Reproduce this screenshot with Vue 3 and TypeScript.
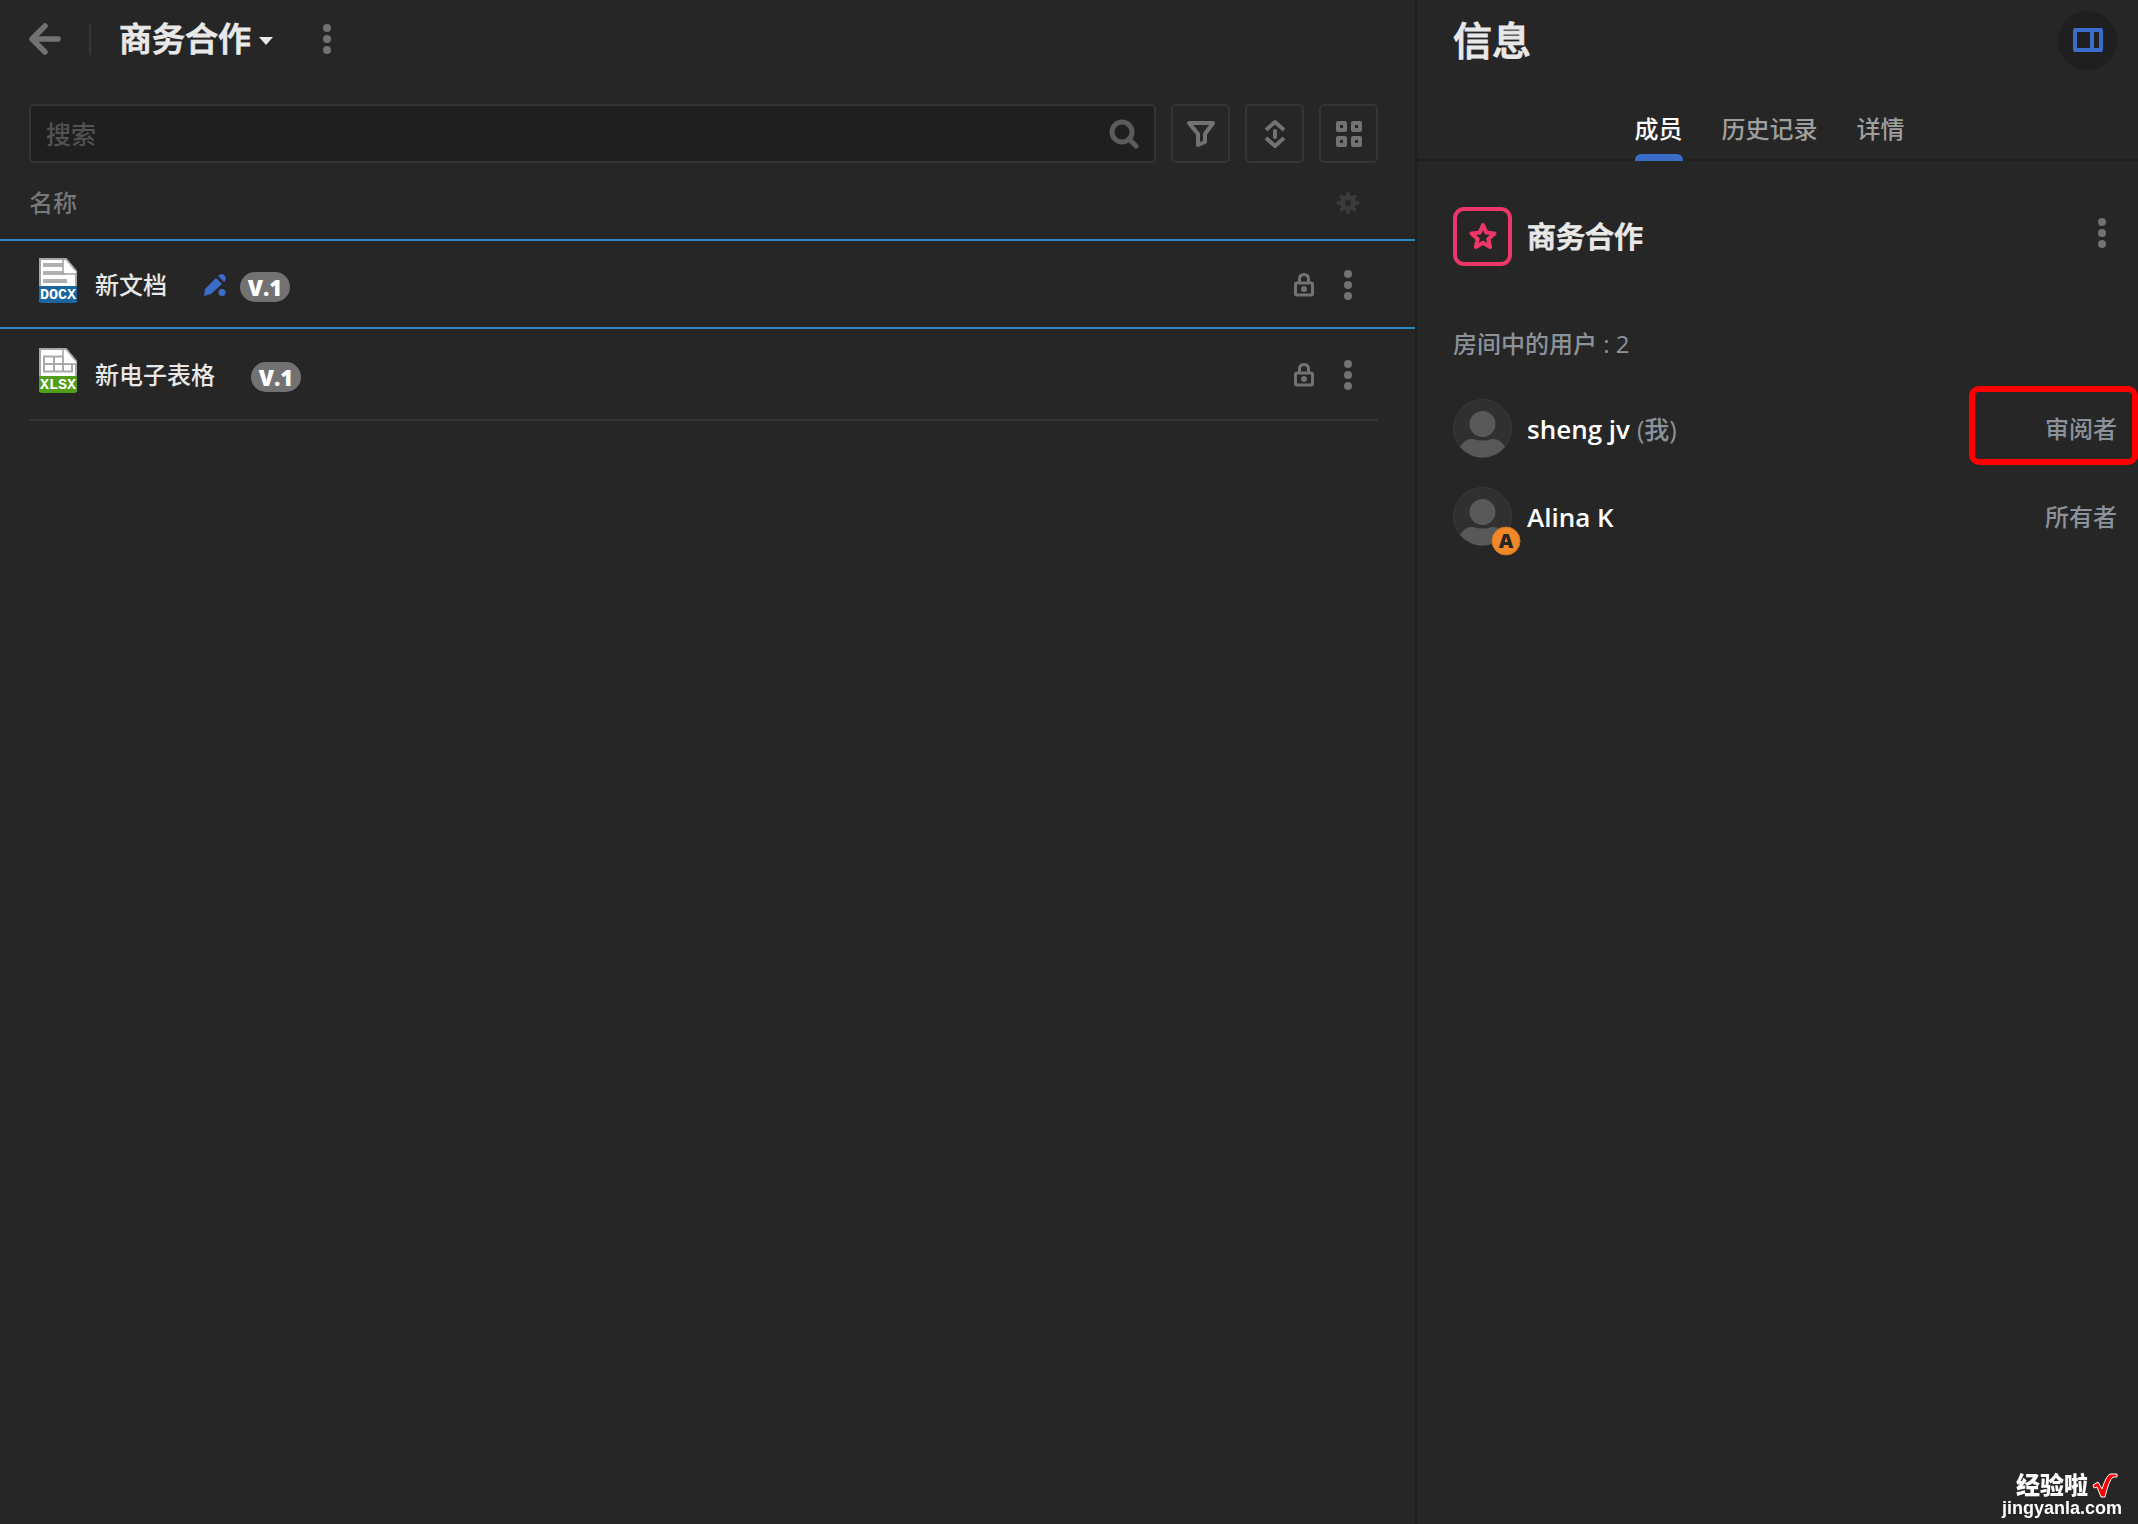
<script setup lang="ts">
import { ref } from 'vue'

interface FileItem {
  name: string
  kind: 'docx' | 'xlsx'
  editing: boolean
  version: string
}

interface Member {
  name: string
  self: boolean
  role: string
  admin: boolean
}

const files: FileItem[] = [
  { name: '新文档', kind: 'docx', editing: true, version: 'V.1' },
  { name: '新电子表格', kind: 'xlsx', editing: false, version: 'V.1' },
]

const members: Member[] = [
  { name: 'sheng jv', self: true, role: '审阅者', admin: false },
  { name: 'Alina K', self: false, role: '所有者', admin: true },
]

const tabs = ['成员', '历史记录', '详情']
const activeTab = ref('成员')
const activeFile = ref('新文档')
const query = ref('')
</script>

<template>
  <div class="app">
    <main class="files">
      <header class="bar">
        <button class="plain back" aria-label="返回">
          <svg width="32" height="32" viewBox="0 0 32 32"><path d="M16 3 3 16l13 13M4 16h25" fill="none" stroke="currentColor" stroke-width="5.500" stroke-linecap="round" stroke-linejoin="round" /></svg>
        </button>
        <span class="rule"></span>
        <button class="plain room-title">
          <h1>商务合作</h1>
          <svg width="14" height="8" viewBox="0 0 14 8"><path d="M0 0h14L7 8z" fill="currentColor" /></svg>
        </button>
        <button class="plain dots header-dots" aria-label="更多"><i></i><i></i><i></i></button>
      </header>

      <div class="tools">
        <label class="search">
          <input v-model="query" type="text" placeholder="搜索" aria-label="搜索" />
          <svg width="30" height="30" viewBox="0 0 30 30"><g fill="none" stroke="currentColor"><circle cx="13" cy="13" r="10" stroke-width="5" /><path d="m20 20 7 7" stroke-width="5" stroke-linecap="round" /></g></svg>
        </label>
        <button class="tool" aria-label="筛选">
          <svg width="30" height="28" viewBox="0 0 30 28"><path d="M3 3h24l-8 11v8l-7 3V14z" fill="none" stroke="currentColor" stroke-width="4" stroke-linejoin="round" /></svg>
        </button>
        <button class="tool" aria-label="排序">
          <svg width="22" height="30" viewBox="0 0 22 30"><g fill="none" stroke="currentColor" stroke-width="4"><path d="m2 11 9-8 9 8M2 19l9 8 9-8" stroke-linejoin="round" /><path d="M11 12v6" stroke-linecap="round" /></g></svg>
        </button>
        <button class="tool" aria-label="视图">
          <svg width="26" height="26" viewBox="0 0 26 26"><g fill="none" stroke="currentColor" stroke-width="4" stroke-linejoin="round"><path d="M2 2h7v7H2zM17 2h7v7h-7zM2 17h7v7H2zM17 17h7v7h-7z" /></g></svg>
        </button>
      </div>

      <table>
        <thead>
          <tr>
            <th scope="col"><div class="head">名称</div></th>
            <th class="end">
              <div class="actions">
                <button class="plain gear" aria-label="列设置">
                  <svg width="22" height="22" viewBox="0 0 22 22"><g fill="none" stroke="currentColor"><circle cx="11" cy="11" r="5.500" stroke-width="5" /><path d="M11 1.500v3M11 17.500v3M1.500 11h3M17.500 11h3M4.300 4.300l2 2M15.700 15.700l2 2M4.300 17.700l2-2M15.700 6.300l2-2" stroke-width="3.500" stroke-linecap="round" /></g></svg>
                </button>
              </div>
            </th>
          </tr>
        </thead>
        <tbody>
          <tr v-for="f in files" :key="f.name" :class="{ active: f.name === activeFile }" @click="activeFile = f.name">
            <td>
              <div class="file">
                <svg class="file-icon" width="38" height="45" viewBox="0 0 38 45">
                  <path d="M1 1h26l10 12v30H1z" fill="#fff" stroke="#a6a6a6" stroke-width="2" />
                  <g v-if="f.kind === 'docx'" fill="#b0b0b0"><path d="M4 5h20v4H4zM4 13h22v4H4zM4 21h24v4H4z" /></g>
                  <path v-else d="M5 8.500h28v15H5zM5 16h28M15 8v16M24 8v16" fill="none" stroke="#a9a9a9" stroke-width="2" />
                  <path d="M24 2h3l10 11v3H24z" fill="#fff" />
                  <path d="M24 1v15h13" fill="none" stroke="#a0a0a0" stroke-width="1.500" />
                  <path d="m27 1 10 12" stroke="#a6a6a6" stroke-width="1.500" />
                  <path d="M0 28h38v14q0 3-3 3H3q-3 0-3-3z" :fill="f.kind === 'docx' ? '#1b669f' : '#539e18'" />
                  <text x="19" y="41" text-anchor="middle" class="ext">{{ f.kind.toUpperCase() }}</text>
                </svg>
                <span class="name">{{ f.name }}</span>
                <svg v-if="f.editing" class="pencil" width="24" height="24" viewBox="0 0 24 24"><g fill="currentColor"><path d="m13 5 6 6L8 21l-7 2 1-7z" /><path d="M15 3q4-4 7 0 2 3-1 6z" /><circle cx="19" cy="19.500" r="3.500" /></g></svg>
                <span class="version" :class="{ apart: !f.editing }">{{ f.version }}</span>
              </div>
            </td>
            <td class="end">
              <div class="actions">
                <button class="plain lock" aria-label="锁定">
                  <svg width="20" height="24" viewBox="0 0 20 24"><g fill="none" stroke="currentColor" stroke-width="3"><rect x="1.500" y="10" width="17" height="12" rx="1.500" /><path d="M5.500 10V6q0-4.500 4.500-4.500T14.500 6v4" /></g><circle cx="10" cy="16" r="3" fill="currentColor" /></svg>
                </button>
                <button class="plain dots" aria-label="更多"><i></i><i></i><i></i></button>
              </div>
            </td>
          </tr>
        </tbody>
      </table>
    </main>

    <aside class="info">
      <header class="info-bar">
        <h2>信息</h2>
        <button class="plain toggle" aria-label="信息面板">
          <svg width="30" height="24" viewBox="0 0 30 24"><path d="M2 2h26v20H2zM19 2v20" fill="none" stroke="currentColor" stroke-width="4" stroke-linejoin="round" /></svg>
        </button>
      </header>
      <nav class="tabs">
        <button v-for="t in tabs" :key="t" class="plain tab" :class="{ on: t === activeTab }" @click="activeTab = t">{{ t }}</button>
      </nav>

      <section class="room">
        <span class="room-icon">
          <svg width="30" height="30" viewBox="0 0 30 30"><path d="m15 3 3.300 7.600 8.200.8-6.200 5.500 1.800 8.100-7.100-4.200L7.900 25l1.800-8.100-6.200-5.500 8.200-.8z" fill="none" stroke="currentColor" stroke-width="4" stroke-linejoin="round" /></svg>
        </span>
        <h3>商务合作</h3>
        <button class="plain dots" aria-label="更多"><i></i><i></i><i></i></button>
      </section>

      <p class="count">房间中的用户 : 2</p>
      <ul class="members">
        <li v-for="m in members" :key="m.name">
          <span class="avatar">
            <svg width="59" height="59" viewBox="0 0 59 59">
              <circle cx="29.500" cy="29.500" r="29" fill="#303030" stroke="#393939" />
              <circle cx="29.500" cy="25" r="13" fill="#585858" />
              <path d="M7 48q5-9 13-8 9 3 19 0 8-1 13 8a29.500 29.500 0 0 1-45 0z" fill="#585858" />
            </svg>
            <svg v-if="m.admin" class="admin" width="30" height="30" viewBox="0 0 30 30">
              <circle cx="15" cy="15" r="14" fill="#f08828" stroke="#c87421" stroke-width="1" />
              <text x="15" y="22" text-anchor="middle">A</text>
            </svg>
          </span>
          <span class="who">{{ m.name }}</span>
          <span v-if="m.self" class="me">(我)</span>
          <button class="plain role" :class="{ marked: m.self }">{{ m.role }}</button>
        </li>
      </ul>
    </aside>

    <div class="watermark">
      <div class="brand">
        <span>经验啦</span>
        <svg width="26" height="26" viewBox="0 0 26 26"><path d="m1 12 5-3 4 7Q14 3 18 1h7v3h-4q-4 3-8 20H9L5 14l-3 1z" fill="#f00" stroke="#fff" stroke-width="1" /></svg>
      </div>
      <div class="site">jingyanla.com</div>
    </div>
  </div>
</template>

<style>
body {
  background: #262626;
}
</style>

<style scoped>
.app {
  display: flex;
  min-height: 100vh;
  background: #262626;
  color: #e8e8e8;
  font-family: 'Open Sans', 'Noto Sans CJK SC', sans-serif;
  font-size: 24px;
  font-weight: 500;
  line-height: 32px;
}
.app *,
.app *::before,
.app *::after {
  box-sizing: border-box;
}
svg {
  display: block;
  flex: none;
}
h1,
h2,
h3,
p,
ul {
  margin: 0;
  padding: 0;
  font-weight: 500;
}
h1,
h2,
h3 {
  -webkit-text-stroke: 1px currentColor;
}
.plain {
  padding: 0;
  border: 0;
  background: none;
  color: #727272;
  font: inherit;
  cursor: pointer;
}
.files {
  flex: 1;
  min-width: 0;
}
.bar {
  display: flex;
  align-items: center;
  height: 78px;
  padding-left: 29px;
}
.rule {
  width: 2px;
  height: 31px;
  margin: 0 28px;
  background: #363636;
}
.room-title {
  display: flex;
  align-items: center;
  gap: 8px;
  color: #e8e8e8;
}
h1 {
  font-size: 33px;
  line-height: 44px;
}
.room-title svg {
  margin-top: 4px;
}
.dots {
  display: flex;
  flex-direction: column;
  align-items: center;
  gap: 3px;
  width: 30px;
}
.dots i {
  width: 8px;
  height: 8px;
  border-radius: 50%;
  background: #727272;
}
.header-dots {
  margin-left: 39px;
}
.tools {
  display: flex;
  gap: 15px;
  padding: 26px 37px 0 29px;
}
.search {
  display: flex;
  flex: 1;
  align-items: center;
  height: 59px;
  padding: 0 15px;
  border: 2px solid #343434;
  border-radius: 5px;
  background: #1f1f1f;
  color: #5c5c5c;
}
.search input {
  flex: 1;
  min-width: 0;
  padding: 0;
  border: 0;
  outline: 0;
  background: none;
  color: #e8e8e8;
  font: inherit;
  font-size: 25px;
}
.search input::placeholder {
  color: #525252;
  opacity: 1;
}
.tool {
  display: flex;
  align-items: center;
  justify-content: center;
  width: 59px;
  height: 59px;
  padding: 0;
  border: 2px solid #343434;
  border-radius: 5px;
  background: none;
  color: #727272;
}
table {
  width: 100%;
  border-spacing: 0;
}
th,
td {
  padding: 0;
  text-align: left;
}
.end {
  width: 200px;
}
.head,
.file {
  display: flex;
  align-items: center;
  margin-left: 29px;
}
.actions {
  display: flex;
  align-items: center;
  justify-content: flex-end;
  gap: 19px;
  margin-right: 37px;
  padding: 2px 15px 0 0;
}
thead .head,
thead .actions {
  height: 76px;
  padding-top: 4px;
}
.head {
  color: #787878;
  font-weight: 500;
}
.gear {
  width: 30px;
  color: #3b3b3b;
}
.gear svg {
  margin: auto;
}
tbody .file,
tbody .actions {
  height: 92px;
  padding-top: 2px;
  border-bottom: 2px solid #363636;
}
tbody .active .file,
tbody .active .actions {
  height: 86px;
  border: 0;
}
.active td {
  border-top: 2px solid #2489c5;
  border-bottom: 2px solid #2489c5;
}
.file-icon {
  margin: 0 18px 10px 10px;
}
.ext {
  fill: #fff;
  font: bold 15px 'Liberation Mono', monospace;
}
.pencil {
  margin-left: 36px;
  color: #3a6cca;
}
.version {
  width: 50px;
  height: 30px;
  margin: 4px 0 0 13px;
  border-radius: 15px;
  background: #727272;
  color: #fff;
  font-size: 22px;
  font-weight: 800;
  line-height: 30px;
  text-align: center;
}
.apart {
  margin-left: 36px;
}
.info {
  flex: none;
  width: 723px;
  border-left: 2px solid #1f1f1f;
}
.info-bar {
  display: flex;
  align-items: center;
  justify-content: space-between;
  height: 80px;
  padding: 0 21px 0 36px;
}
h2 {
  font-size: 39px;
  line-height: 52px;
}
.toggle {
  display: flex;
  align-items: center;
  justify-content: center;
  width: 59px;
  height: 59px;
  border-radius: 50%;
  background: #1f1f1f;
  color: #3a6cca;
}
.tabs {
  display: flex;
  justify-content: center;
  gap: 39px;
  height: 81px;
  padding-right: 16px;
  border-bottom: 2px solid #1f1f1f;
}
.tab {
  position: relative;
  height: 81px;
  padding-top: 16px;
  color: #9f9f9f;
}
.on {
  color: #fff;
}
.on::after {
  content: '';
  position: absolute;
  right: 0;
  bottom: 0;
  left: 0;
  height: 7px;
  border-radius: 6px 6px 0 0;
  background: #3a6cca;
}
.room {
  display: flex;
  align-items: center;
  gap: 15px;
  padding: 46px 21px 0 36px;
}
.room-icon {
  display: flex;
  align-items: center;
  justify-content: center;
  width: 59px;
  height: 59px;
  border: 4px solid #ee3668;
  border-radius: 11px;
  color: #ee3668;
}
h3 {
  flex: 1;
  font-size: 29px;
  line-height: 40px;
}
.room .dots {
  margin-bottom: 8px;
}
.count {
  padding: 62px 36px 0;
  color: #8b929a;
}
.members {
  display: flex;
  flex-direction: column;
  gap: 29px;
  padding: 39px 21px 0 36px;
  list-style: none;
}
.members li {
  display: flex;
  align-items: center;
  height: 59px;
}
.avatar {
  position: relative;
  margin-right: 15px;
}
.admin {
  position: absolute;
  right: -9px;
  bottom: -10px;
}
.admin text {
  fill: #262626;
  font: 800 20px 'Open Sans', sans-serif;
}
.who {
  color: #fff;
  font-size: 26px;
  font-weight: 600;
}
.me {
  margin-left: 7px;
  color: #8b929a;
  font-size: 25px;
}
.role {
  position: relative;
  margin-left: auto;
  color: #8b929a;
}
.marked::before {
  content: '';
  position: absolute;
  top: -27px;
  right: -21px;
  width: 169px;
  height: 79px;
  border: 6px solid #f00;
  border-radius: 10px;
}
.watermark {
  position: fixed;
  right: 16px;
  bottom: 7px;
  color: #fff;
  font-family: 'Liberation Sans', 'Noto Sans CJK SC', sans-serif;
  font-weight: 900;
  text-align: right;
}
.brand {
  display: flex;
  align-items: center;
  justify-content: flex-end;
  gap: 4px;
  padding-right: 4px;
  font-size: 24px;
  font-style: oblique 8deg;
  line-height: 24px;
}
.site {
  font-size: 18px;
  line-height: 18px;
}
</style>
